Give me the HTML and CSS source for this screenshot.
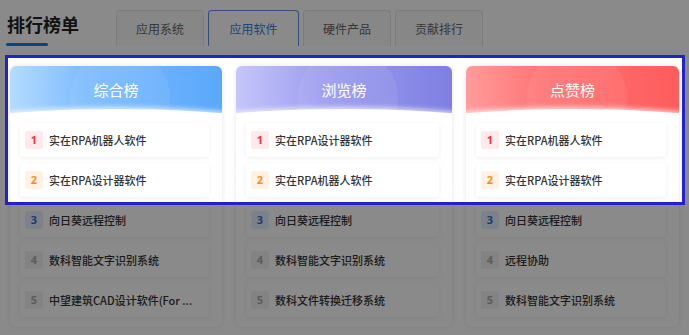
FILE: index.html
```html
<!DOCTYPE html>
<html>
	<head>
		<meta charset="utf-8">
		<title>排行榜单</title>
		<link rel="stylesheet" href="styles.css">
	</head>
	<body>
		<div class="page">
			<div class="top">
				<div class="title">排行榜单</div>
				<ul class="tabs">
					<li>应用系统</li>
					<li class="active">应用软件</li>
					<li>硬件产品</li>
					<li>贡献排行</li>
				</ul>
			</div>

			<div class="board">
				<div class="card">
					<div class="card-head blue"><span>综合榜</span></div>
					<ul class="rank">
						<li><i class="no n1">1</i><span>实在RPA机器人软件</span></li>
						<li><i class="no n2">2</i><span>实在RPA设计器软件</span></li>
						<li><i class="no n3">3</i><span>向日葵远程控制</span></li>
						<li><i class="no">4</i><span>数科智能文字识别系统</span></li>
						<li><i class="no">5</i><span>中望建筑CAD设计软件(For ...</span></li>
					</ul>
				</div>
				<div class="card">
					<div class="card-head purple"><span>浏览榜</span></div>
					<ul class="rank">
						<li><i class="no n1">1</i><span>实在RPA设计器软件</span></li>
						<li><i class="no n2">2</i><span>实在RPA机器人软件</span></li>
						<li><i class="no n3">3</i><span>向日葵远程控制</span></li>
						<li><i class="no">4</i><span>数科智能文字识别系统</span></li>
						<li><i class="no">5</i><span>数科文件转换迁移系统</span></li>
					</ul>
				</div>
				<div class="card">
					<div class="card-head red"><span>点赞榜</span></div>
					<ul class="rank">
						<li><i class="no n1">1</i><span>实在RPA机器人软件</span></li>
						<li><i class="no n2">2</i><span>实在RPA设计器软件</span></li>
						<li><i class="no n3">3</i><span>向日葵远程控制</span></li>
						<li><i class="no">4</i><span>远程协助</span></li>
						<li><i class="no">5</i><span>数科智能文字识别系统</span></li>
					</ul>
				</div>
			</div>
		</div>

		<!-- 引导高亮框 -->
		<div class="guide"></div>
	</body>
</html>
```

FILE: styles.css
```css
html,body,div,ul,li {margin: 0px;padding: 0px;}
li {list-style: none;}
body {background: #fff;font-family: "Noto Sans CJK SC", "Noto Sans", sans-serif;color: #333;overflow: hidden;}

.page {width: 689px;height: 335px;}

.top {display: flex;align-items: flex-start;padding: 10px 0 0 6px;height: 46px;box-sizing: border-box;}
.title {width: 109px;font-size: 18px;font-weight: 700;color: #222;line-height: 28px;padding-left: 1px;height: 36px;}
.title::after {content: "";display: block;width: 42px;height: 3px;border-radius: 2px;background: #1f7ae6;margin-top: 5px;margin-left: -1px;}

.tabs {display: flex;gap: 4px;}
.tabs li {width: 88px;height: 36px;box-sizing: border-box;border: 1px solid #e6e6e6;border-bottom: none;border-radius: 4px 4px 0 0;background: #fafafa;font-size: 12px;color: #666;text-align: center;line-height: 36px;}
.tabs li.active {width: 91px;background: #fff;border-color: #5b93de;color: #3d7fd9;}

.board {display: grid;grid-template-columns: 212px 216px 213px;gap: 14px;padding: 20px 0 0 10px;}
.card {background: #fff;border-radius: 6px;box-shadow: 0 0 5px rgba(0,0,0,.10);padding-bottom: 10px;height: 261px;box-sizing: border-box;}

.card-head {height: 49px;border-radius: 6px 6px 0 0;position: relative;overflow: hidden;text-align: center;color: #fff;font-size: 15px;line-height: 48px;}
.card-head span {position: relative;z-index: 2;}
.card-head::before {content: "";position: absolute;left: 50%;top: -18px;width: 100px;height: 100px;margin-left: -46px;border-radius: 50%;background: rgba(255,255,255,.07);}
.card-head::after {content: "";position: absolute;left: -45%;right: -45%;bottom: -52px;height: 58px;border-radius: 50%;background: #fff;box-shadow: 0 -2px 5px rgba(255,255,255,.7);}
.blue {background: linear-gradient(90deg, #b4dcff 0%, #7dbcff 35%, #5aa8fb 100%);}
.purple {background: linear-gradient(90deg, #c6c6fa 0%, #9c9cf0 40%, #7f7fe2 100%);}
.red {background: linear-gradient(90deg, #ff9c9c 0%, #ff7575 35%, #ff5c5c 100%);}

.rank {display: flex;flex-direction: column;gap: 6px;padding: 8px 13px 0 10px;}
.rank li {height: 34px;display: flex;align-items: center;gap: 6px;padding: 0 14px 0 5px;background: #fff;border-radius: 3px;box-shadow: 0 1px 4px rgba(0,0,0,.07);font-size: 11px;font-weight: 500;color: #333;}
.rank li span {white-space: nowrap;overflow: hidden;text-overflow: ellipsis;}
.no {flex: none;width: 18px;height: 18px;border-radius: 2px;font-style: normal;font-size: 11px;font-weight: 700;line-height: 18px;text-align: center;background: #f2f2f2;color: #aaa;font-family: "Open Sans", sans-serif;}
.no.n1 {background: #ffe9ea;color: #f2343e;}
.no.n2 {background: #fff2e3;color: #ff8a1a;}
.no.n3 {background: #e8f1ff;color: #2e6fd8;}

.guide {position: absolute;left: 5px;top: 55px;width: 680px;height: 150px;box-sizing: border-box;border: 3px solid #2222cc;box-shadow: 0 0 0 2000px rgba(0,0,0,.46);}
```
